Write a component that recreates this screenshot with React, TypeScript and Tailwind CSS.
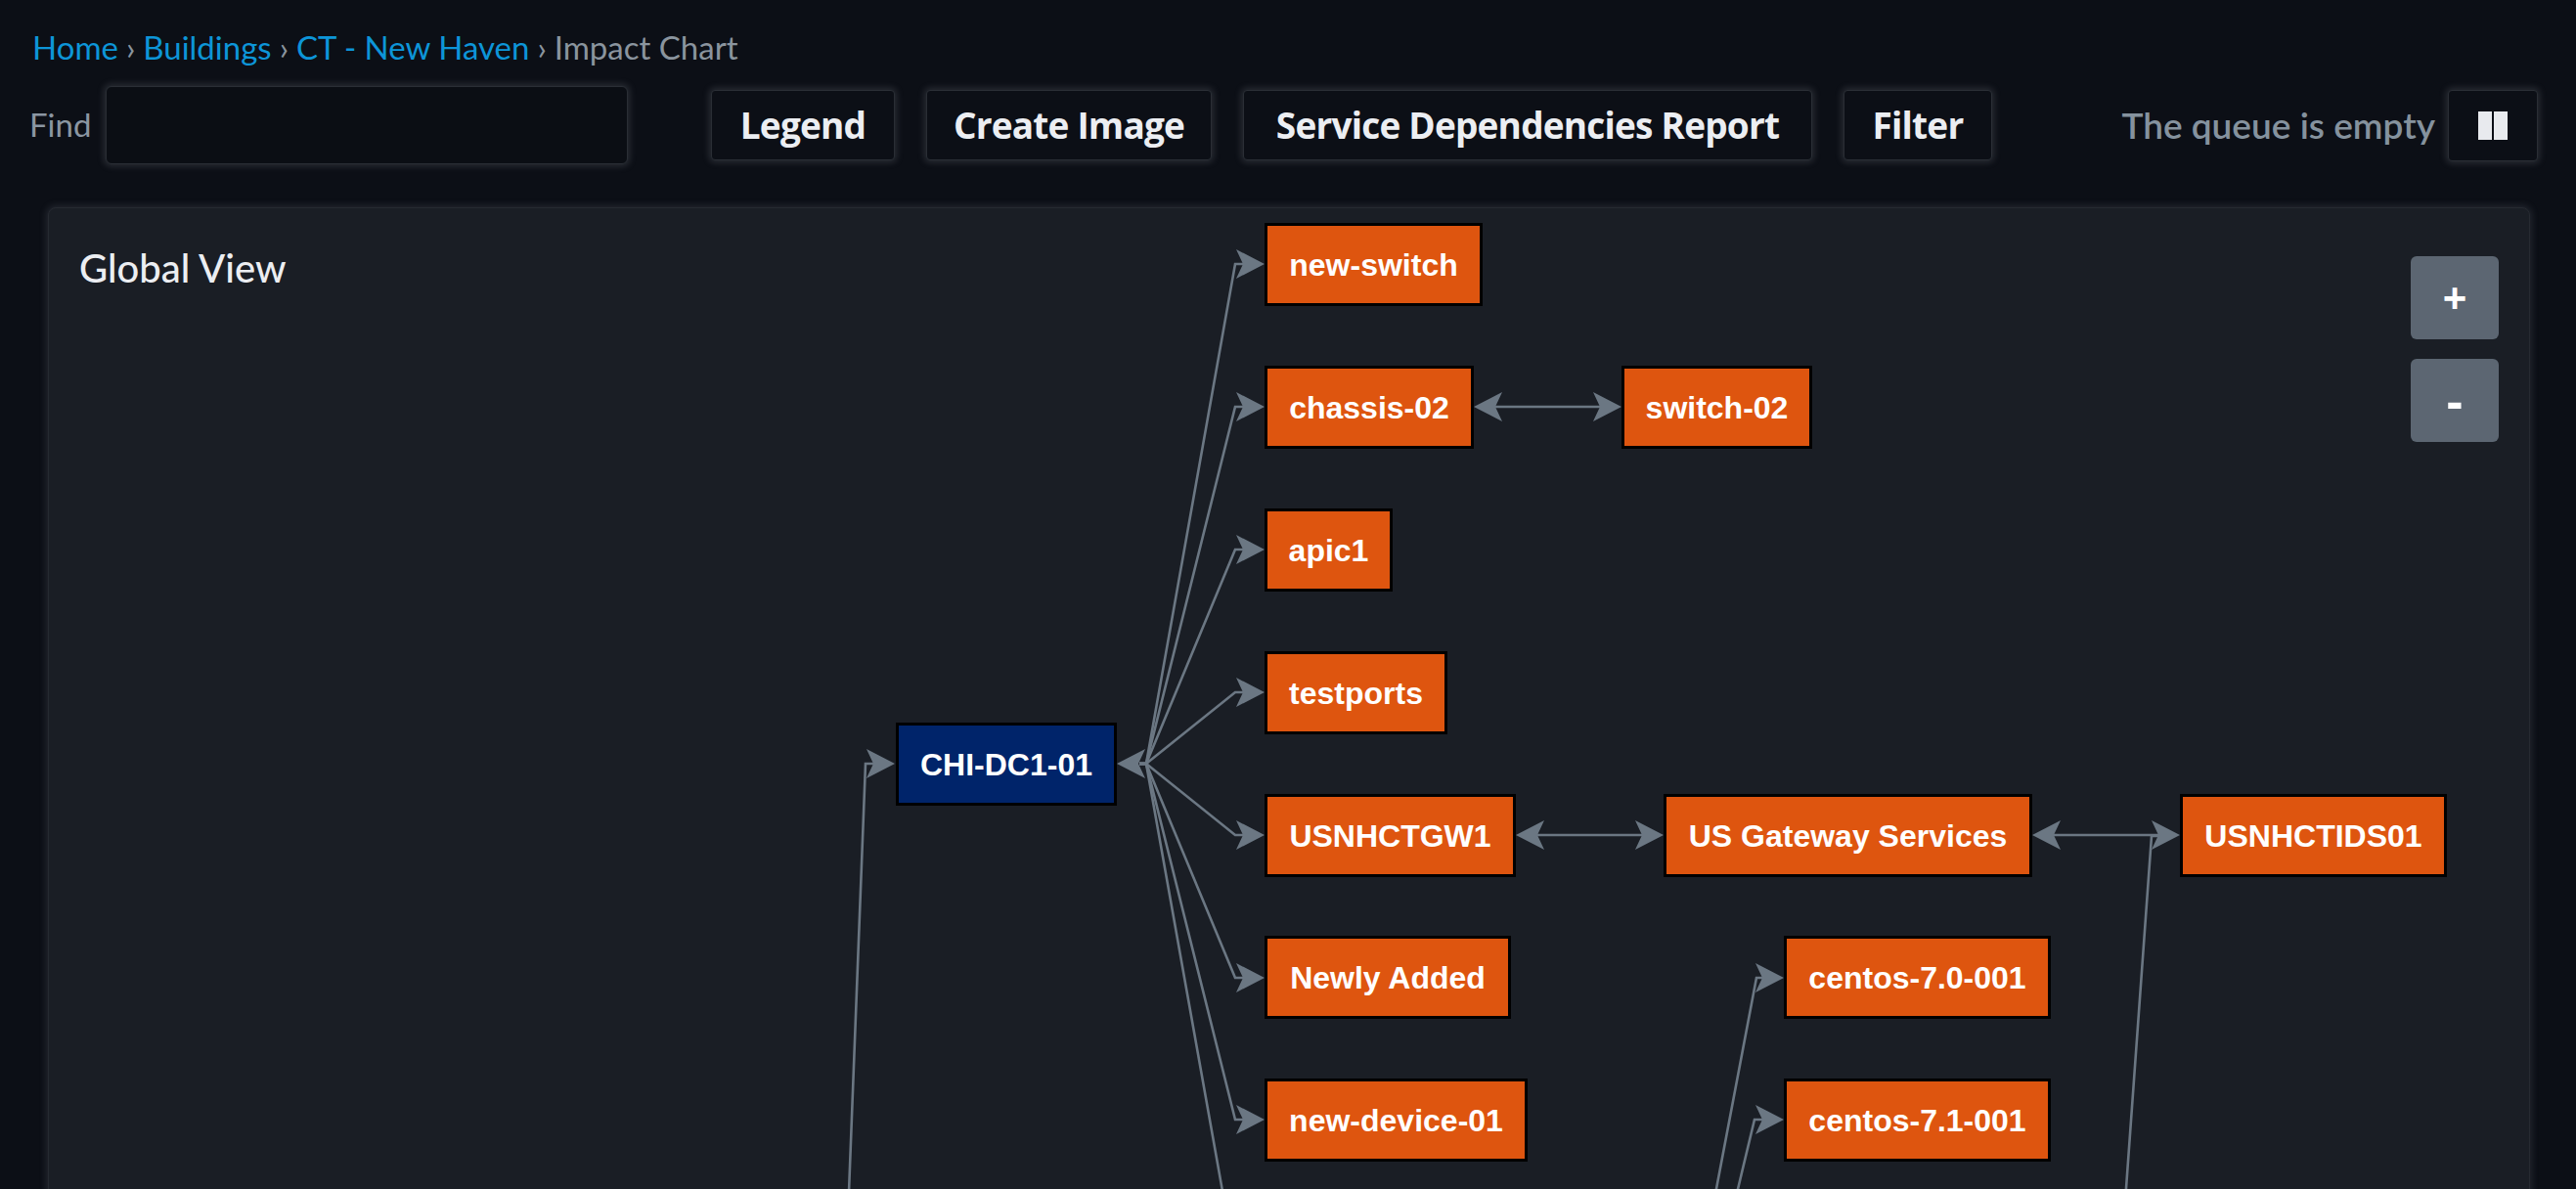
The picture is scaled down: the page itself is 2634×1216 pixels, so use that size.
import React from "react";

interface GraphNode {
  label: string;
  x: number;
  y: number;
  w: number;
  root?: boolean;
}

// page coordinates of the canvas origin (panel left/top + border)
const OX = 50;
const OY = 213;

const nodes: GraphNode[] = [
  { label: "new-switch", x: 1293, y: 228, w: 223 },
  { label: "chassis-02", x: 1293, y: 374, w: 214 },
  { label: "switch-02", x: 1658, y: 374, w: 195 },
  { label: "apic1", x: 1293, y: 520, w: 131 },
  { label: "testports", x: 1293, y: 666, w: 187 },
  { label: "CHI-DC1-01", x: 916, y: 739, w: 226, root: true },
  { label: "USNHCTGW1", x: 1293, y: 812, w: 257 },
  { label: "US Gateway Services", x: 1701, y: 812, w: 377 },
  { label: "USNHCTIDS01", x: 2229, y: 812, w: 273 },
  { label: "Newly Added", x: 1293, y: 957, w: 252 },
  { label: "centos-7.0-001", x: 1824, y: 957, w: 273 },
  { label: "new-device-01", x: 1293, y: 1103, w: 269 },
  { label: "centos-7.1-001", x: 1824, y: 1103, w: 273 },
];

const hubChildren = [270, 416, 562, 708, 854, 1000, 1145, 1291];

function arrow(tip: number, y: number, dir: 1 | -1) {
  const b = tip - 29 * dir;
  const n = tip - 22 * dir;
  return `M${tip} ${y} L${b} ${y - 15} L${n} ${y} L${b} ${y + 15} Z`;
}

function Edges() {
  const line = "#6b7783";
  const paths: string[] = [];
  const heads: string[] = [];

  // CHI-DC1-01 -> children
  hubChildren.forEach((yc) => {
    paths.push(`M1165 781 L1172 781 L1263 ${yc} L1272 ${yc}`);
    heads.push(arrow(1293, yc, 1));
  });
  heads.push(arrow(1142, 781, -1));

  // parent below into CHI-DC1-01
  paths.push("M861 1400 L885 781 L894 781");
  heads.push(arrow(915, 781, 1));

  // two-way links
  const pairs: [number, number, number][] = [
    [1507, 1658, 416],
    [1550, 1701, 854],
    [2078, 2229, 854],
  ];
  pairs.forEach(([a, b, y]) => {
    paths.push(`M${a + 22} ${y} L${b - 22} ${y}`);
    heads.push(arrow(a, y, -1));
    heads.push(arrow(b, y, 1));
  });

  // links coming up from below the fold
  paths.push("M2165 1340 L2200 855 L2207 855");
  paths.push("M1720 1400 L1796 1000 L1802 1000");
  heads.push(arrow(1824, 1000, 1));
  paths.push("M1733 1400 L1794 1145 L1802 1145");
  heads.push(arrow(1824, 1145, 1));

  return (
    <svg className="absolute left-0 top-0" width={2540} height={1100}>
      <g transform={`translate(${-OX} ${-OY})`}>
        {paths.map((d, i) => (
          <path key={i} d={d} fill="none" stroke={line} strokeWidth={2.6} />
        ))}
        {heads.map((d, i) => (
          <path key={`h${i}`} d={d} fill={line} />
        ))}
      </g>
    </svg>
  );
}

const toolbar = [
  { label: "Legend", cls: "w-[188px]" },
  { label: "Create Image", cls: "w-[292px]" },
  { label: "Service Dependencies Report", cls: "w-[582px]" },
  { label: "Filter", cls: "w-[152px]" },
];

export default function App() {
  return (
    <div className="w-[2634px] h-[1216px] overflow-hidden bg-[#0c0f16] font-['Lato',sans-serif]">
      <div className="pl-[33px] pt-[29px] text-[33px] leading-[38px] text-[#8a949e]">
        <span className="text-[#0d95d8]">Home</span>
        <span className="mx-[8px]">›</span>
        <span className="text-[#0d95d8]">Buildings</span>
        <span className="mx-[8px]">›</span>
        <span className="text-[#0d95d8]">CT - New Haven</span>
        <span className="mx-[8px]">›</span>
        <span>Impact Chart</span>
      </div>

      <div className="flex items-center h-[80px] mt-[21px] pl-[30px] pr-[39px]">
        <div className="w-[78px] text-[33px] text-[#8b96a2]">Find</div>
        <input className="w-[534px] h-[80px] rounded-[6px] bg-[#0b0e14] border border-[#2a2e35] shadow-[0_0_7px_2px_rgba(150,155,165,0.22)] outline-none" />
        <div className="flex gap-[32px] ml-[85px]">
          {toolbar.map((b) => (
            <button
              key={b.label}
              className={`${b.cls} h-[72px] rounded-[4px] bg-[#0c0f16] border border-[#2a2e35] shadow-[0_0_7px_2px_rgba(150,155,165,0.22)] text-[37px] font-bold text-[#eceef2] font-['Open_Sans',sans-serif] tracking-[-0.8px] whitespace-nowrap`}
            >
              {b.label}
            </button>
          ))}
        </div>
        <div className="ml-auto flex items-center gap-[13px]">
          <span className="text-[37px] font-semibold text-[#85929e]">The queue is empty</span>
          <button className="w-[92px] h-[73px] rounded-[4px] bg-[#0c0f16] border border-[#2a2e35] shadow-[0_0_7px_2px_rgba(150,155,165,0.22)] flex items-center justify-center gap-[2px]">
            <span className="w-[14px] h-[29px] bg-[#e8eaee]" />
            <span className="w-[14px] h-[29px] bg-[#e8eaee]" />
          </button>
        </div>
      </div>

      <div className="relative ml-[49px] mr-[47px] mt-[44px] h-[1100px] rounded-[8px] bg-[#1a1e25] border border-[#262a31] shadow-[0_0_7px_2px_rgba(120,125,135,0.22)] overflow-hidden">
        <div className="pl-[31px] pt-[37px] text-[40px] leading-[48px] font-medium text-[#eceef2]">
          Global View
        </div>

        <Edges />

        {nodes.map((n) => (
          <div
            key={n.label}
            className={`absolute h-[85px] flex items-center justify-center border-[3px] border-black text-white text-[32px] font-bold font-['Liberation_Sans',Arial,sans-serif] whitespace-nowrap ${
              n.root ? "bg-[#00246a]" : "bg-[#de550f]"
            }`}
            style={{ left: n.x - OX, top: n.y - OY, width: n.w }}
          >
            {n.label}
          </div>
        ))}

        <div className="absolute right-[31px] top-[49px] flex flex-col gap-[20px]">
          <button className="w-[90px] h-[85px] rounded-[6px] bg-[#5c6672] text-white text-[42px] font-bold font-['Liberation_Sans',Arial,sans-serif] leading-none">
            +
          </button>
          <button className="w-[90px] h-[85px] rounded-[6px] bg-[#5c6672] text-white text-[52px] font-bold font-['Liberation_Sans',Arial,sans-serif] leading-none">
            -
          </button>
        </div>
      </div>
    </div>
  );
}
